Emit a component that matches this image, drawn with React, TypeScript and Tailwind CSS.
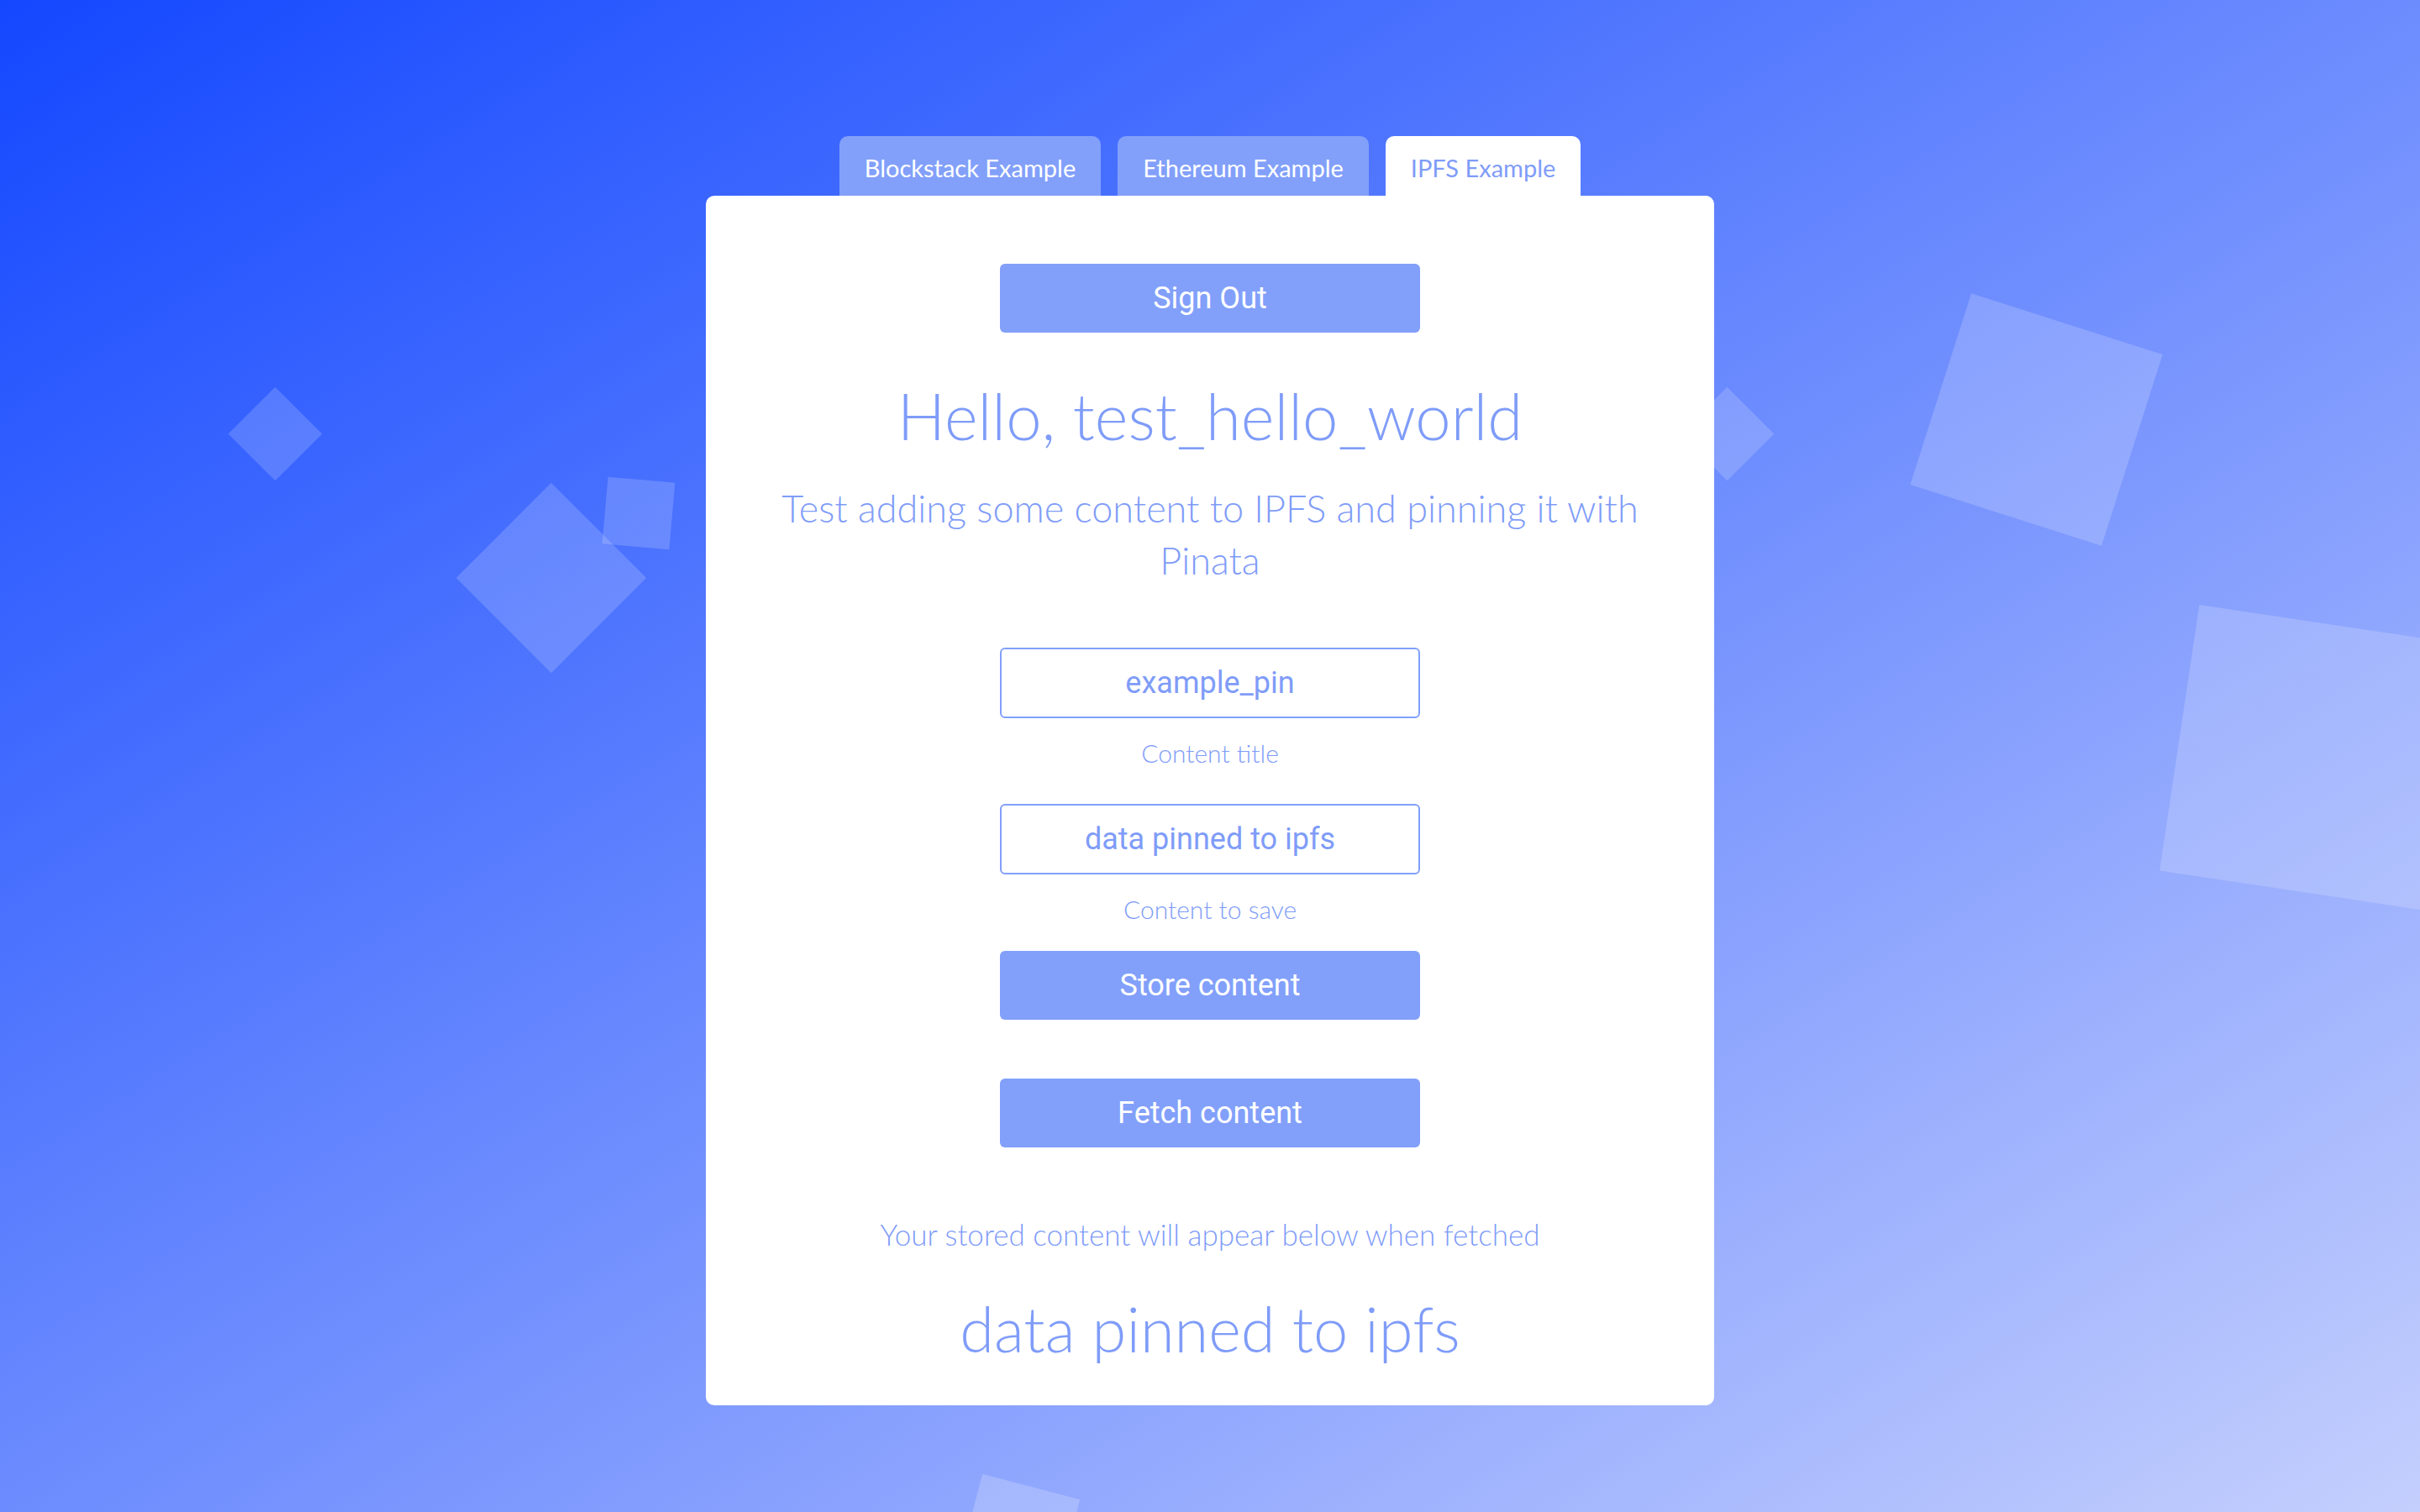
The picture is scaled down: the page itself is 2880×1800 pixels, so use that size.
const tabs = [
  { label: "Blockstack Example", active: false },
  { label: "Ethereum Example", active: false },
  { label: "IPFS Example", active: true },
];

function Shapes() {
  return (
    <>
      <div className="absolute left-[288px] top-[477px] h-[79px] w-[79px] rotate-45 bg-white/[0.17]" />
      <div className="absolute left-[576px] top-[608px] h-[160px] w-[160px] rotate-45 bg-white/[0.17]" />
      <div className="absolute left-[720px] top-[571px] h-[80px] w-[80px] rotate-[5deg] bg-white/[0.17]" />
      <div className="absolute left-[2016px] top-[477px] h-[79px] w-[79px] rotate-45 bg-white/[0.17]" />
      <div className="absolute left-[2304px] top-[380px] h-[239px] w-[239px] rotate-[17.7deg] bg-white/[0.18]" />
      <div className="absolute left-[2592px] top-[742px] h-[320px] w-[320px] rotate-[8.5deg] bg-white/[0.18]" />
      <div className="absolute left-[1152px] top-[1768px] h-[120px] w-[120px] rotate-[14.7deg] bg-white/[0.2]" />
    </>
  );
}

function Field({ value, label }: { value: string; label: string }) {
  return (
    <>
      <input
        readOnly
        value={value}
        className="h-[84px] w-[500px] rounded-[6px] border-2 border-[#82a0fa] bg-white text-center font-['Roboto',sans-serif] text-[36px] text-[#7f9cf8] outline-none"
      />
      <p className="mt-[21px] font-['Lato',sans-serif] text-[30px] font-light leading-[40px] text-[#7f9cf8]">
        {label}
      </p>
    </>
  );
}

export default function App() {
  return (
    <div className="relative h-[1800px] w-full overflow-hidden bg-[linear-gradient(to_bottom_right,#1448ff,#c4cffd)]">
      <Shapes />
      <div className="relative z-10 flex flex-col items-center pt-[162px]">
        <div className="flex gap-[20px]">
          {tabs.map((t) => (
            <div
              key={t.label}
              className={
                "h-[71px] rounded-t-[10px] px-[30px] pt-[4px] font-['Lato',sans-serif] text-[29px] leading-[67px] " +
                (t.active ? "bg-white text-[#7f9cf8]" : "bg-[#82a0fa] text-white")
              }
            >
              {t.label}
            </div>
          ))}
        </div>

        <div className="flex w-[1200px] flex-col items-center rounded-[10px] bg-white px-[80px] pb-[51px] pt-[81px] text-center">
          <button className="h-[82px] w-[500px] rounded-[6px] bg-[#82a0fa] font-['Roboto',sans-serif] text-[36px] text-white">
            Sign Out
          </button>

          <h1 className="mt-[61px] font-['Lato',sans-serif] text-[76px] font-light leading-[76px] text-[#7f9cf8]">
            Hello, test_hello_world
          </h1>

          <p className="mt-[41px] font-['Lato',sans-serif] text-[45px] font-light leading-[62px] text-[#7f9cf8]">
            Test adding some content to IPFS and pinning it with Pinata
          </p>

          <div className="mt-[73px] flex flex-col items-center">
            <Field value="example_pin" label="Content title" />
            <div className="mt-[41px]" />
            <Field value="data pinned to ipfs" label="Content to save" />
          </div>

          <button className="mt-[30px] h-[82px] w-[500px] rounded-[6px] bg-[#82a0fa] font-['Roboto',sans-serif] text-[36px] text-white">
            Store content
          </button>
          <button className="mt-[70px] h-[82px] w-[500px] rounded-[6px] bg-[#82a0fa] font-['Roboto',sans-serif] text-[36px] text-white">
            Fetch content
          </button>

          <p className="mt-[81px] font-['Lato',sans-serif] text-[35px] font-light leading-[44px] text-[#7f9cf8]">
            Your stored content will appear below when fetched
          </p>
          <p className="mt-[51px] font-['Lato',sans-serif] text-[74px] font-light leading-[80px] text-[#7f9cf8]">
            data pinned to ipfs
          </p>
        </div>
      </div>
    </div>
  );
}
